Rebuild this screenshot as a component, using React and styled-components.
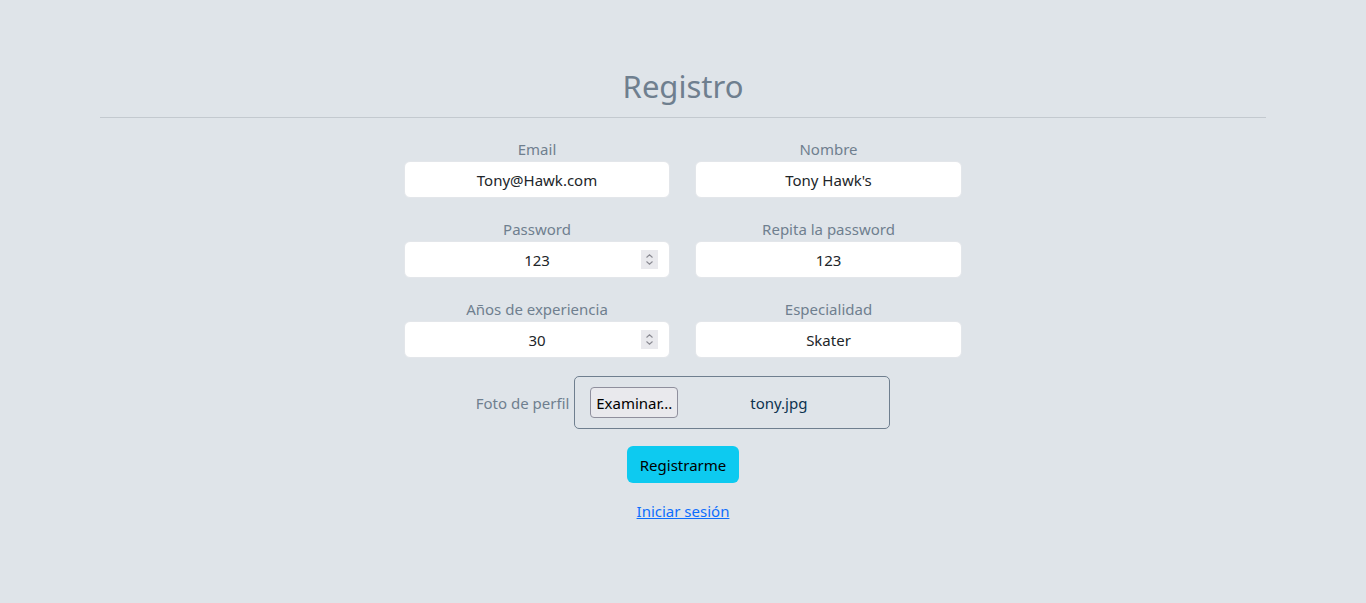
import React from "react";
import styled, { createGlobalStyle } from "styled-components";

const Global = createGlobalStyle`
  html, body { margin: 0; padding: 0; background: #dfe4e9; }
  body { font-family: "Noto Sans", "Open Sans", sans-serif; }
  * { box-sizing: border-box; }
`;

const Page = styled.div`
  min-height: 603px;
  padding: 62px 100px 40px;
  display: flex;
  flex-direction: column;
  align-items: center;
`;

const Title = styled.h1`
  margin: 0;
  font-size: 31px;
  font-weight: 400;
  line-height: 48px;
  color: #6f7f8f;
`;

const Rule = styled.hr`
  width: 100%;
  margin: 7px 0 17px;
  border: 0;
  border-top: 1px solid #c3c9cf;
`;

const Grid = styled.div`
  display: grid;
  grid-template-columns: 266px 267px;
  column-gap: 25px;
  row-gap: 17px;
`;

const Field = styled.div`
  display: flex;
  flex-direction: column;
  align-items: stretch;
`;

const Label = styled.label`
  text-align: center;
  font-size: 15px;
  line-height: 24px;
  color: #6f7f8f;
  padding-top: 2px;
`;

const InputWrap = styled.div`
  position: relative;
`;

const Input = styled.input`
  display: block;
  width: 100%;
  height: 37px;
  border: 1px solid #e3e6ea;
  border-radius: 6px;
  background: #fff;
  text-align: center;
  font-family: inherit;
  font-size: 15px;
  color: #212529;
  padding: 0 12px;
  outline: none;
`;

const Spinner = styled.span`
  position: absolute;
  right: 12px;
  top: 9px;
  width: 17px;
  height: 19px;
  background: #e9e9ed;
  display: flex;
  align-items: center;
  justify-content: center;
`;

const FileRow = styled.div`
  display: flex;
  align-items: center;
  gap: 5px;
  margin-top: 18px;
`;

const FileLabel = styled.span`
  font-size: 15px;
  color: #6f7f8f;
`;

const FileBox = styled.div`
  width: 316px;
  height: 53px;
  border: 1px solid #6f7f8f;
  border-radius: 5px;
  display: flex;
  align-items: center;
  padding-left: 15px;
`;

const BrowseButton = styled.button`
  height: 31px;
  width: 88px;
  padding: 0;
  border: 1px solid #8f8f9d;
  border-radius: 4px;
  background: #e9e9ed;
  font-family: inherit;
  font-size: 15px;
  color: #000;
`;

const FileName = styled.span`
  flex: 1;
  text-align: center;
  font-size: 15px;
  color: #0d3350;
  padding-right: 10px;
`;

const Submit = styled.button`
  margin-top: 17px;
  height: 37px;
  padding: 0 13px;
  border: 0;
  border-radius: 6px;
  background: #0dcaf0;
  font-family: inherit;
  font-size: 15px;
  color: #000;
`;

const Link = styled.a`
  margin-top: 18px;
  font-size: 15px;
  color: #0d6efd;
  text-decoration: underline;
`;

const SpinIcon = () => (
  <Spinner>
    <svg width="9" height="13" viewBox="0 0 9 13" fill="none" stroke="#8a8a92" strokeWidth="1.1">
      <path d="M1.5 4.5 L4.5 1.8 L7.5 4.5" />
      <path d="M1.5 8.5 L4.5 11.2 L7.5 8.5" />
    </svg>
  </Spinner>
);

const TextField = ({ label, value, spin }) => (
  <Field>
    <Label>{label}</Label>
    <InputWrap>
      <Input defaultValue={value} readOnly />
      {spin && <SpinIcon />}
    </InputWrap>
  </Field>
);

export default function App() {
  return (
    <>
      <Global />
      <Page>
        <Title>Registro</Title>
        <Rule />
        <Grid>
          <TextField label="Email" value="Tony@Hawk.com" />
          <TextField label="Nombre" value="Tony Hawk's" />
          <TextField label="Password" value="123" spin />
          <TextField label="Repita la password" value="123" />
          <TextField label="Años de experiencia" value="30" spin />
          <TextField label="Especialidad" value="Skater" />
        </Grid>
        <FileRow>
          <FileLabel>Foto de perfil</FileLabel>
          <FileBox>
            <BrowseButton>Examinar...</BrowseButton>
            <FileName>tony.jpg</FileName>
          </FileBox>
        </FileRow>
        <Submit>Registrarme</Submit>
        <Link href="#">Iniciar sesión</Link>
      </Page>
    </>
  );
}
